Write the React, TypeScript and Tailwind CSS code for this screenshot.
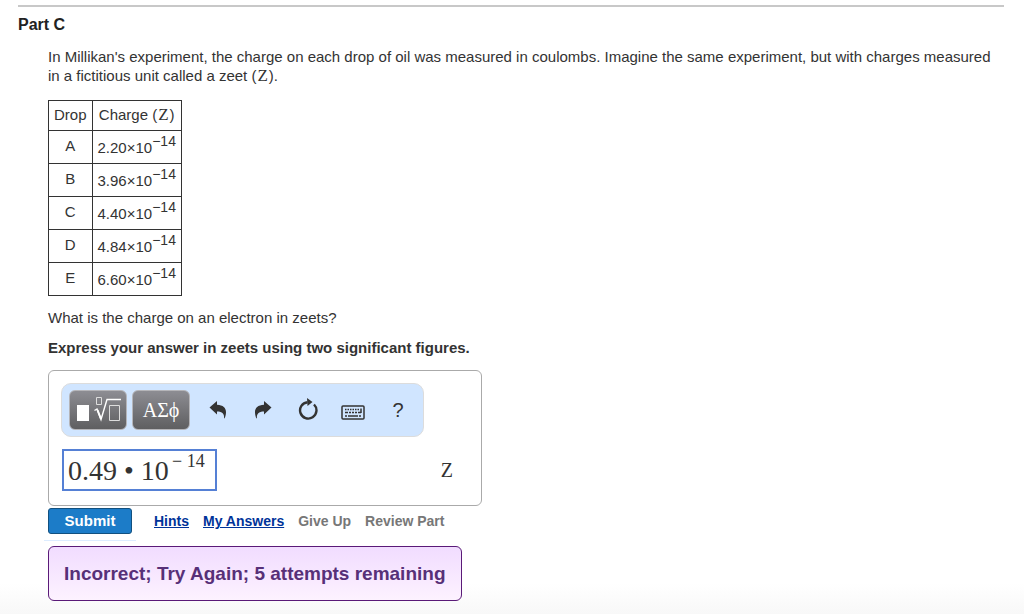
import React, { FC, ReactNode } from "react";

interface DropCharge {
  drop: string;
  charge: string;
}

const DROPS: DropCharge[] = [
  { drop: "A", charge: "2.20" },
  { drop: "B", charge: "3.96" },
  { drop: "C", charge: "4.40" },
  { drop: "D", charge: "4.84" },
  { drop: "E", charge: "6.60" },
];

const serif = "font-['Liberation_Serif',serif]";

const Unit: FC = () => <span className={`${serif} mx-px text-[17px] leading-none`}>Z</span>;

const DropTable: FC = () => (
  <table className="mt-[15px] border-collapse text-center text-[15px] leading-5">
    <thead>
      <tr className="h-[30px]">
        <th className="border border-[#333] px-[5px] pb-0.5 font-normal">Drop</th>
        <th className="border border-[#333] px-[5px] pb-0.5 font-normal">
          Charge (<Unit />)
        </th>
      </tr>
    </thead>
    <tbody>
      {DROPS.map(({ drop, charge }) => (
        <tr key={drop} className="h-[33px]">
          <td className="border border-[#333] px-[5px] pb-0.5">{drop}</td>
          <td className="border border-[#333] px-[5px] pt-0.5 text-left">
            {charge}×10<sup className="text-sm leading-none">−14</sup>
          </td>
        </tr>
      ))}
    </tbody>
  </table>
);

interface ToolButtonProps {
  label: string;
  dark?: boolean;
  children: ReactNode;
}

const ToolButton: FC<ToolButtonProps> = ({ label, dark, children }) => (
  <button
    type="button"
    aria-label={label}
    className={
      dark
        ? "flex h-10 w-[58px] items-center justify-center rounded-md border border-[#b5b5b9] bg-linear-to-b from-[#8d8d93] to-[#5f5f61] text-white"
        : "flex h-10 w-6 items-center justify-center text-[#333]"
    }
  >
    {children}
  </button>
);

const TemplateIcon: FC = () => (
  <svg width="46" height="30" viewBox="0 0 46 30" fill="none" stroke="#fff">
    <path d="M2 10h12v16H2z" fill="#fff" stroke="none" />
    <path d="M21.500 2.500h5v7h-5z" stroke="#ddd" />
    <path d="M19.500 15.500l2.500-1.500 4 10.500L32 4.500h14" strokeWidth="1.400" />
    <path d="M22.500 15l3.500 9" strokeWidth="2" />
    <path d="M34.500 10.500h10v15h-10z" stroke="#ddd" />
  </svg>
);

const UndoIcon: FC = () => (
  <svg width="18" height="20" viewBox="0 0 18 20" fill="currentColor">
    <path d="M0.500 7.500L8 1v3.800C14 5 17.200 8 17 12.500c-.1 2.400-.7 4.300-1.400 6-.1-.1-.3-.2-.5-.2.200-4.500-1.600-6.800-7.100-6.800V14.500z" />
  </svg>
);

const RedoIcon: FC = () => (
  <svg width="18" height="20" viewBox="0 0 18 20" fill="currentColor">
    <path d="M17.500 7.500L10 1v3.800C4 5 .8 8 1 12.500c.1 2.400.7 4.300 1.400 6 .1-.1.3-.2.5-.2-.2-4.500 1.600-6.800 7.100-6.800V14.500z" />
  </svg>
);

const ResetIcon: FC = () => (
  <svg width="20" height="24" viewBox="0 0 20 24" fill="none">
    <path d="M16 6.500A8.200 8.200 0 1 1 9.500 4.200" stroke="currentColor" strokeWidth="2.400" />
    <path d="M9 0l5.500 4L9.500 8z" fill="currentColor" />
  </svg>
);

const KeyboardIcon: FC = () => (
  <svg width="24" height="20" viewBox="0 0 24 20" fill="none" stroke="currentColor">
    <rect x="1" y="6" width="22" height="13" rx="1" strokeWidth="1.500" />
    <path d="M4 9.500h15" strokeWidth="1.500" strokeDasharray="1.500 1" />
    <path d="M4 12.500h3M8 12.500h2M11 12.500h2M14 12.500h2M17 12.500h3M20 8.500v4.500" strokeWidth="1.500" />
    <path d="M4 16h2M7 16h10M18 16h2" strokeWidth="1.500" />
  </svg>
);

const AnswerBox: FC = () => (
  <div className="mt-3 w-[434px] max-w-full rounded-md border border-[#aaa] p-3 pb-3.5">
    <div className="flex w-[363px] items-center rounded-[10px] border border-[#dcdcdc] bg-[#d0e5ff] px-[7px] py-1.5">
      <div className="flex gap-[5px]">
        <ToolButton label="Templates" dark>
          <TemplateIcon />
        </ToolButton>
        <ToolButton label="Symbols" dark>
          <span className={`${serif} text-xl leading-none`}>ΑΣϕ</span>
        </ToolButton>
      </div>
      <div className="ml-4 flex gap-[21px]">
        <ToolButton label="Undo">
          <UndoIcon />
        </ToolButton>
        <ToolButton label="Redo">
          <RedoIcon />
        </ToolButton>
        <ToolButton label="Reset">
          <ResetIcon />
        </ToolButton>
        <ToolButton label="Keyboard shortcuts">
          <KeyboardIcon />
        </ToolButton>
        <ToolButton label="Help">
          <span className="text-xl leading-none">?</span>
        </ToolButton>
      </div>
    </div>
    <div className={`${serif} mt-3 flex items-center justify-between pr-4 pl-px`}>
      <div className="flex h-[42px] w-[155px] items-start border-2 border-[#5580d5] pl-1">
        <input
          aria-label="Answer"
          defaultValue="0.49 • 10"
          className="h-[38px] w-[104px] pt-0.5 text-[28px] outline-none"
        />
        <input
          aria-label="Exponent"
          defaultValue="− 14"
          className="h-5 w-10 text-lg outline-none"
        />
      </div>
      <span className="text-xl">Z</span>
    </div>
  </div>
);

export default function App() {
  return (
    <main className="min-h-screen bg-linear-to-b from-white from-95% to-[#f8f8f8] px-[18px] pt-[5px] pb-3 font-['Liberation_Sans',Arial,sans-serif] text-[15px] text-[#333]">
      <div className="mr-0.5 border-t-2 border-[#c8c8c8]" />
      <h2 className="mt-2 text-base leading-5 font-bold text-[#222]">Part C</h2>
      <section className="pl-[30px]">
        <p className="mt-3 leading-[19px]">
          In Millikan's experiment, the charge on each drop of oil was measured in coulombs.
          Imagine the same experiment, but with charges measured in a fictitious unit called a
          zeet (<Unit />).
        </p>
        <DropTable />
        <p className="mt-3 leading-5">What is the charge on an electron in zeets?</p>
        <p className="mt-2.5 leading-5 font-bold">
          Express your answer in zeets using two significant figures.
        </p>
        <AnswerBox />
        <div className="mt-0.5 flex items-center text-sm font-bold">
          <button
            type="button"
            className="h-[26px] w-[84px] rounded-[3px] border border-[#12507f] bg-[#1c7cc8] text-[15px] text-white"
          >
            Submit
          </button>
          <a href="#hints" className="ml-[22px] text-[#003399] underline">
            Hints
          </a>
          <a href="#answers" className="ml-3.5 text-[#003399] underline">
            My Answers
          </a>
          <span className="ml-3.5 text-[#777]">Give Up</span>
          <span className="ml-3.5 text-[#777]">Review Part</span>
        </div>
        <div className="-ml-1 mt-1.5 w-[92px] border-t border-[#dcecff]" />
        <div
          role="status"
          className="mt-[5px] w-fit rounded-md border border-[#5a1a78] bg-linear-to-b from-[#f1dcff] to-[#fdf2ff] px-[15px] py-3.5 text-[19px] leading-[25px] font-bold text-[#573078]"
        >
          Incorrect; Try Again; 5 attempts remaining
        </div>
      </section>
    </main>
  );
}
